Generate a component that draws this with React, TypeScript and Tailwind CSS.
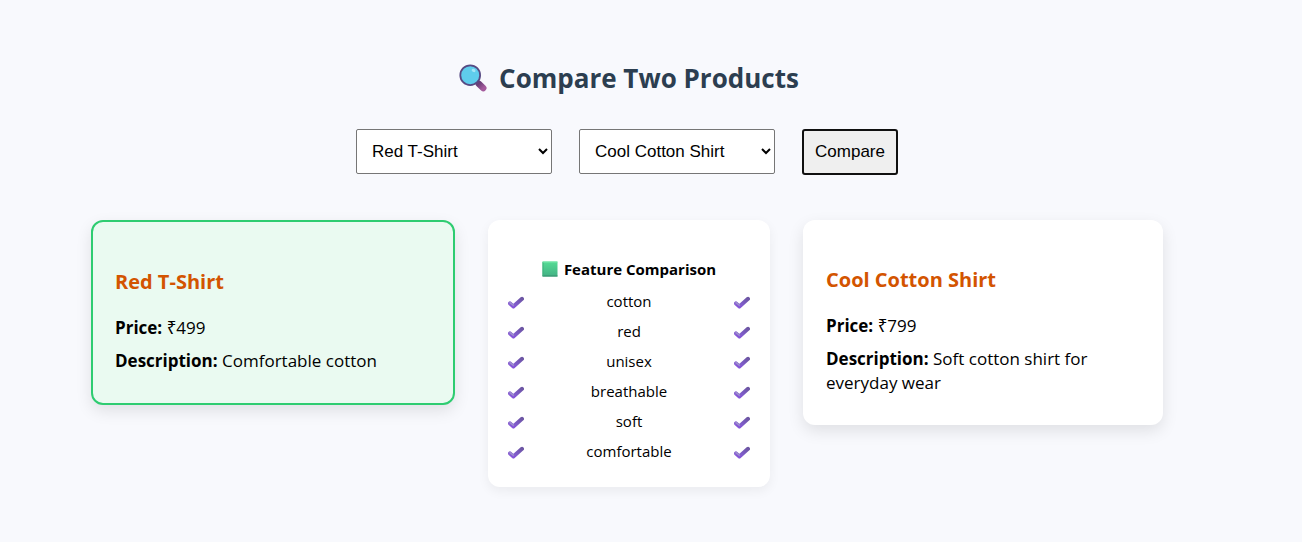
import { useState } from "react";

type Product = { id: string; name: string; price: number; description: string };

const products: Product[] = [
  { id: "red", name: "Red T-Shirt", price: 499, description: "Comfortable cotton" },
  { id: "cool", name: "Cool Cotton Shirt", price: 799, description: "Soft cotton shirt for everyday wear" },
];

const features = ["cotton", "red", "unisex", "breathable", "soft", "comfortable"];

function Magnifier() {
  return (
    <svg className="h-7 w-7" viewBox="0 0 28 28" aria-hidden="true">
      <defs>
        <linearGradient id="handle" x1="0" y1="0" x2="1" y2="1">
          <stop offset="0" stopColor="#6b3f78" />
          <stop offset="1" stopColor="#a45a9c" />
        </linearGradient>
      </defs>
      <path d="M17.6 17.6l3 3" stroke="#5a4a80" strokeWidth="2" />
      <path d="M19.9 19.9l4.4 4.2" stroke="url(#handle)" strokeWidth="6.4" strokeLinecap="round" />
      <circle cx="11.2" cy="11.2" r="9.9" fill="#5fcdec" stroke="#574a83" strokeWidth="1.8" />
      <ellipse cx="14.6" cy="6.4" rx="2" ry="1.5" transform="rotate(30 14.6 6.4)" fill="#a5e5f6" />
    </svg>
  );
}

function GreenSquare() {
  return (
    <svg className="h-4 w-4" viewBox="0 0 16 16" aria-hidden="true">
      <defs>
        <linearGradient id="green" x1="0" y1="0" x2="0" y2="1">
          <stop offset="0" stopColor="#55dc95" />
          <stop offset="1" stopColor="#43b184" />
        </linearGradient>
      </defs>
      <rect x="0.5" y="0.5" width="15" height="15" rx="0.5" fill="url(#green)" />
      <path d="M0.5 15h15" stroke="#348e6c" />
      <path d="M1 1v14" stroke="#3fb07d" />
      <path d="M0.5 1h15" stroke="#7ce8ae" />
    </svg>
  );
}

function Check({ label }: { label: string }) {
  return (
    <svg className="h-4 w-4" viewBox="0 0 16 16" role="img" aria-label={label}>
      <defs>
        <linearGradient id="check" x1="0" y1="1" x2="1" y2="0">
          <stop offset="0" stopColor="#8d63d8" />
          <stop offset="0.5" stopColor="#7b5ac4" />
          <stop offset="1" stopColor="#6d56a4" />
        </linearGradient>
      </defs>
      <path d="M2 10.4L5.4 13.4L14 5.8" fill="none" stroke="url(#check)" strokeWidth="4" strokeLinecap="round" strokeLinejoin="round" />
      <path d="M2 9.6L5.2 12.2" fill="none" stroke="#9d8fd0" strokeWidth="1.5" strokeLinecap="round" />
      <path d="M2.2 12L5.4 14.7L8 12.9" fill="none" stroke="#8149dc" strokeWidth="0.9" />
    </svg>
  );
}

function ProductSelect({ label, value, onChange }: { label: string; value: string; onChange: (v: string) => void }) {
  return (
    <select
      aria-label={label}
      value={value}
      onChange={(e) => onChange(e.target.value)}
      className="h-[45px] w-[196px] rounded-xs border border-[#767676] bg-white px-[11px] font-['Liberation_Sans',Arial,sans-serif] text-[17px] text-black"
    >
      {products.map((p) => (
        <option key={p.id} value={p.id}>{p.name}</option>
      ))}
    </select>
  );
}

function ProductCard({ product, best }: { product: Product; best: boolean }) {
  return (
    <article
      className={
        best
          ? "rounded-xl border-2 border-[#2ecc71] bg-[#eafaf1] px-[22px] pt-[45px] pb-[30px] shadow-[0_6px_16px_rgba(0,0,0,0.1)]"
          : "rounded-xl bg-white px-[23px] pt-[45px] pb-[30px] shadow-[0_6px_16px_rgba(0,0,0,0.1)]"
      }
    >
      <h3 className="mb-[19px] text-xl leading-[30px] font-bold text-[#d35400]">{product.name}</h3>
      <p className="mb-[9px] text-[17px] leading-6"><strong>Price:</strong> ₹{product.price}</p>
      <p className="text-[17px] leading-6"><strong>Description:</strong> {product.description}</p>
    </article>
  );
}

export default function App() {
  const [first, setFirst] = useState("red");
  const [second, setSecond] = useState("cool");
  const [shown, setShown] = useState(["red", "cool"]);
  const [left, right] = shown.map((id) => products.find((p) => p.id === id) ?? products[0]);

  return (
    <div className="min-h-screen bg-[#f8f9fd] pt-[58px] pr-12 pb-12 font-['Open_Sans','Noto_Sans',sans-serif] text-black">
      <main className="mx-auto max-w-[1072px]">
        <h2 className="flex items-center justify-center gap-3 pl-1 text-[26px] leading-10 font-bold text-[#2c3e50]">
          <Magnifier />
          Compare Two Products
        </h2>
        <form
          className="mt-[31px] flex flex-wrap items-start justify-center gap-[27px]"
          onSubmit={(e) => {
            e.preventDefault();
            setShown([first, second]);
          }}
        >
          <ProductSelect label="First product" value={first} onChange={setFirst} />
          <ProductSelect label="Second product" value={second} onChange={setSecond} />
          <button type="submit" className="h-[46px] w-24 rounded-[3px] border-2 border-[#101010] bg-[#efefef] font-['Liberation_Sans',Arial,sans-serif] text-[17px]">
            Compare
          </button>
        </form>
        <div className="mt-[45px] grid items-start gap-[33px] md:grid-cols-[364fr_282fr_360fr]">
          <ProductCard product={left} best={left.price <= right.price} />
          <section className="rounded-xl bg-white px-5 pt-[38px] pb-[21px] shadow-[0_4px_12px_rgba(0,0,0,0.06)]">
            <h4 className="mb-1.5 flex items-center justify-center gap-1.5 text-[15px] leading-[22px] font-bold">
              <GreenSquare />
              Feature Comparison
            </h4>
            <ul>
              {features.map((f) => (
                <li key={f} className="flex h-[30px] items-center justify-between text-[15px]">
                  <Check label="Yes" />
                  <span>{f}</span>
                  <Check label="Yes" />
                </li>
              ))}
            </ul>
          </section>
          <ProductCard product={right} best={right.price < left.price} />
        </div>
      </main>
    </div>
  );
}
